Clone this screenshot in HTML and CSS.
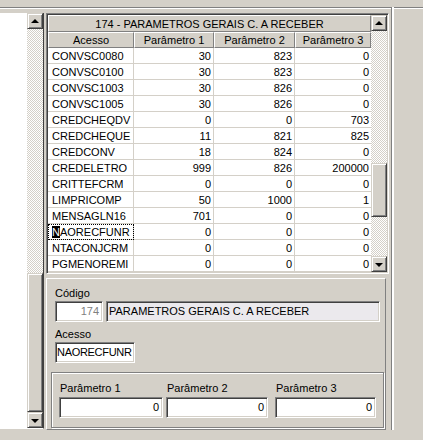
FILE: index.html
```html
<!DOCTYPE html>
<html lang="pt">
<head>
<meta charset="utf-8">
<title>Parâmetros gerais</title>
<link rel="stylesheet" href="styles.css">
</head>
<body>
<div class="app">
  <div class="topbar"></div>
  <div class="main">
    <div class="leftpane">
      <div class="list"></div>
      <div class="vscroll">
        <div class="sbtn"><span class="arrow up"></span></div>
        <div class="track grow"></div>
        <div class="thumb tall"></div>
        <div class="sbtn"><span class="arrow down"></span></div>
      </div>
    </div>
    <div class="rightpane">
      <div class="gridframe">
        <div class="grid">
          <div class="title">174 - PARAMETROS GERAIS C. A RECEBER</div>
          <div class="row head">
            <div class="c c1">Acesso</div>
            <div class="c c2">Parâmetro 1</div>
            <div class="c c3">Parâmetro 2</div>
            <div class="c c4">Parâmetro 3</div>
          </div>
          <div class="row"><div class="c c1">CONVSC0080</div><div class="c c2">30</div><div class="c c3">823</div><div class="c c4">0</div></div>
          <div class="row"><div class="c c1">CONVSC0100</div><div class="c c2">30</div><div class="c c3">823</div><div class="c c4">0</div></div>
          <div class="row"><div class="c c1">CONVSC1003</div><div class="c c2">30</div><div class="c c3">826</div><div class="c c4">0</div></div>
          <div class="row"><div class="c c1">CONVSC1005</div><div class="c c2">30</div><div class="c c3">826</div><div class="c c4">0</div></div>
          <div class="row"><div class="c c1">CREDCHEQDV</div><div class="c c2">0</div><div class="c c3">0</div><div class="c c4">703</div></div>
          <div class="row"><div class="c c1">CREDCHEQUE</div><div class="c c2">11</div><div class="c c3">821</div><div class="c c4">825</div></div>
          <div class="row"><div class="c c1">CREDCONV</div><div class="c c2">18</div><div class="c c3">824</div><div class="c c4">0</div></div>
          <div class="row"><div class="c c1">CREDELETRO</div><div class="c c2">999</div><div class="c c3">826</div><div class="c c4">200000</div></div>
          <div class="row"><div class="c c1">CRITTEFCRM</div><div class="c c2">0</div><div class="c c3">0</div><div class="c c4">0</div></div>
          <div class="row"><div class="c c1">LIMPRICOMP</div><div class="c c2">50</div><div class="c c3">1000</div><div class="c c4">1</div></div>
          <div class="row"><div class="c c1">MENSAGLN16</div><div class="c c2">701</div><div class="c c3">0</div><div class="c c4">0</div></div>
          <div class="row"><div class="c c1 focus"><span class="sel">N</span>AORECFUNR</div><div class="c c2">0</div><div class="c c3">0</div><div class="c c4">0</div></div>
          <div class="row"><div class="c c1">NTACONJCRM</div><div class="c c2">0</div><div class="c c3">0</div><div class="c c4">0</div></div>
          <div class="row"><div class="c c1">PGMENOREMI</div><div class="c c2">0</div><div class="c c3">0</div><div class="c c4">0</div></div>
        </div>
        <div class="vscroll">
          <div class="sbtn"><span class="arrow up"></span></div>
          <div class="track t1"></div>
          <div class="thumb short"></div>
          <div class="track grow"></div>
          <div class="sbtn"><span class="arrow down"></span></div>
        </div>
      </div>
      <div class="editpanel">
        <div class="label">Código</div>
        <div class="fieldrow">
          <div class="field code">174</div>
          <div class="field name">PARAMETROS GERAIS C. A RECEBER</div>
        </div>
        <div class="label">Acesso</div>
        <div class="field acesso">NAORECFUNR</div>
        <div class="group">
          <div class="param p1">
            <div class="plabel">Parâmetro 1</div>
            <div class="field num">0</div>
          </div>
          <div class="param p2">
            <div class="plabel">Parâmetro 2</div>
            <div class="field num">0</div>
          </div>
          <div class="param p3">
            <div class="plabel">Parâmetro 3</div>
            <div class="field num">0</div>
          </div>
        </div>
      </div>
    </div>
  </div>
</div>
</body>
</html>
```

FILE: styles.css
```css
* { box-sizing: border-box; }

html, body {
  margin: 0;
  padding: 0;
  background: #d4d0c8;
}

body {
  font-family: "Liberation Sans", Arial, sans-serif;
  font-size: 11px;
  color: #000;
  width: 423px;
  height: 440px;
  overflow: hidden;
}

.app {
  display: flex;
  flex-direction: column;
  height: 440px;
}

.topbar {
  height: 8px;
  border-bottom: 1px solid #808080;
}

.main {
  display: flex;
  border-top: 1px solid #fff;
  padding-top: 4px;
}

/* left list with its scrollbar */
.leftpane {
  display: flex;
  width: 44px;
  height: 416px;
  border-right: 1px solid #404040;
  border-bottom: 1px solid #fff;
}

.list {
  flex: 1;
  background: #fff;
}

.vscroll {
  width: 16px;
  display: flex;
  flex-direction: column;
  flex-shrink: 0;
}

.sbtn {
  height: 16px;
  flex-shrink: 0;
  background: #d4d0c8;
  border-top: 1px solid #d4d0c8;
  border-left: 1px solid #d4d0c8;
  border-right: 1px solid #404040;
  border-bottom: 1px solid #404040;
  box-shadow: inset 1px 1px 0 #fff, inset -1px -1px 0 #808080;
  display: flex;
  align-items: center;
  justify-content: center;
}

.arrow {
  width: 0;
  height: 0;
  border-left: 4px solid transparent;
  border-right: 4px solid transparent;
}
.arrow.up { border-bottom: 4px solid #000; margin-top: -1px; }
.arrow.down { border-top: 4px solid #000; margin-top: 1px; }

.track {
  background: repeating-conic-gradient(#fff 0 25%, #d4d0c8 0 50%) 0 0 / 2px 2px;
}
.track.grow { flex: 1; }
.track.t1 { height: 132px; }

.thumb {
  flex-shrink: 0;
  background: #d4d0c8;
  border-top: 1px solid #d4d0c8;
  border-left: 1px solid #d4d0c8;
  border-right: 1px solid #404040;
  border-bottom: 1px solid #404040;
  box-shadow: inset 1px 1px 0 #fff, inset -1px -1px 0 #808080;
}
.thumb.tall { height: 139px; }
.thumb.short { height: 54px; }

/* right side */
.rightpane {
  margin-left: 2px;
  margin-top: -6px;
  padding-top: 6px;
  width: 346px;
  border-right: 1px solid #808080;
  box-shadow: 2px 0 0 #fff;
  display: flex;
  flex-direction: column;
}

.gridframe {
  display: flex;
  width: 343px;
  height: 261px;
  border-top: 1px solid #808080;
  border-left: 1px solid #808080;
  border-right: 1px solid #fff;
  border-bottom: 1px solid #fff;
  box-shadow: inset 1px 1px 0 #404040, inset -1px -1px 0 #d4d0c8;
  padding: 1px;
}

.grid {
  width: 323px;
  background: #fff;
  display: flex;
  flex-direction: column;
  overflow: hidden;
}

.title {
  height: 17px;
  line-height: 16px;
  text-align: center;
  background: #d4d0c8;
  border-top: 1px solid #fff;
  border-left: 1px solid #fff;
  border-right: 1px solid #808080;
  border-bottom: 1px solid #808080;
  flex-shrink: 0;
}

.row {
  display: flex;
  height: 16px;
  flex-shrink: 0;
}

.c {
  height: 16px;
  line-height: 16px;
  border-right: 1px solid #d4d0c8;
  border-bottom: 1px solid #d4d0c8;
  padding: 0 2px;
  white-space: nowrap;
  overflow: hidden;
  text-align: right;
}
.c1 { width: 86px; text-align: left; padding-left: 4px; }
.c2 { width: 80px; }
.c3 { width: 81px; }
.c4 { width: 76px; border-right: 0; }

.head .c {
  background: #d4d0c8;
  text-align: center;
  border-top: 1px solid #fff;
  border-left: 1px solid #fff;
  border-right: 1px solid #808080;
  border-bottom: 1px solid #808080;
  line-height: 14px;
  padding: 0;
}
.head .c1 { padding: 0; }

.focus {
  outline: 1px dotted #000;
  outline-offset: -1px;
}

.sel {
  background: #000;
  color: #fff;
}

/* edit panel below the grid */
.editpanel {
  margin-top: 4px;
  width: 340px;
  height: 152px;
  border-top: 1px solid #fff;
  border-left: 1px solid #fff;
  border-right: 1px solid #808080;
  border-bottom: 1px solid #808080;
  padding: 7px 0 0 8px;
}

.label {
  height: 15px;
  line-height: 15px;
}

.fieldrow {
  display: flex;
  gap: 3px;
  margin-bottom: 5px;
}

.field {
  height: 21px;
  line-height: 18px;
  padding: 0 3px;
  border-top: 1px solid #808080;
  border-left: 1px solid #808080;
  border-right: 1px solid #fff;
  border-bottom: 1px solid #fff;
  box-shadow: inset 1px 1px 0 #404040, inset -1px -1px 0 #d4d0c8;
  background: #fff;
  white-space: nowrap;
  overflow: hidden;
}

.field.code {
  width: 48px;
  text-align: right;
  color: #808080;
}
.field.name {
  width: 274px;
  background: #ebe9ed;
  padding-left: 2px;
}
.field.acesso {
  width: 80px;
  padding-left: 1px;
  padding-right: 0;
  letter-spacing: -0.3px;
}

.group {
  margin: 9px 0 0 -4px;
  width: 333px;
  height: 56px;
  border: 1px solid #808080;
  box-shadow: inset 1px 1px 0 #fff, 1px 1px 0 #fff;
  display: flex;
  padding: 8px 0 0 7px;
}

.param {
  display: flex;
  flex-direction: column;
}
.p2 { margin-left: 3px; }
.p3 { margin-left: 7px; }

.plabel {
  height: 16px;
  line-height: 14px;
  padding-left: 1px;
}

.field.num {
  text-align: right;
  padding-right: 3px;
}
.p1 .field.num { width: 104px; }
.p2 .field.num { width: 102px; }
.p3 .field.num { width: 101px; }
```
